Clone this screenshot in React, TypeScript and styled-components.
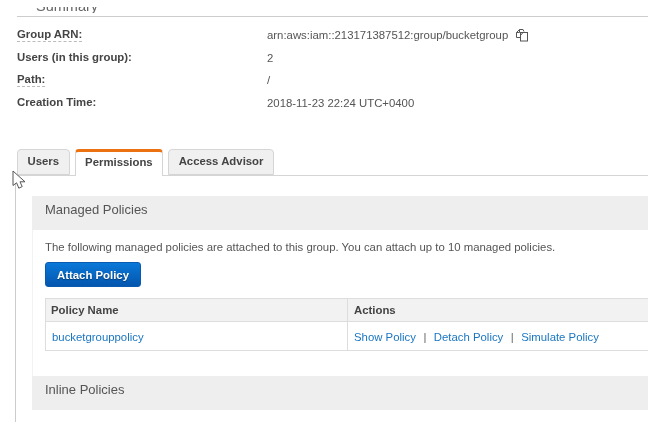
import React from 'react'
import styled, {createGlobalStyle} from 'styled-components'

const GlobalStyle = createGlobalStyle`
  html, body {
    margin: 0;
    background: #fff;
    font-family: "Liberation Sans", Arial, sans-serif;
    font-size: 11.37px;
    color: #444;
  }
`

const Page = styled.main`
  position: relative;
  width: 648px;
  height: 435px;
  overflow: hidden;
  filter: blur(0.35px);
`

const SummaryBar = styled.div`
  margin-left: 17px;
  height: 17px;
  padding-top: 7px;
  box-sizing: border-box;
  border-bottom: 1px solid #ccc;
`

// the screenshot slices the top off this heading
const SummaryClip = styled.div`
  height: 6px;
  overflow: hidden;
`

const SummaryTitle = styled.h2`
  margin: -9px 0 0 19px;
  font-size: 14.5px;
  line-height: 17px;
  font-weight: normal;
  color: #666;
`

const Details = styled.dl`
  margin: 7px 0 0 17px;
  display: grid;
  grid-template-columns: 250px 1fr;
  grid-auto-rows: 22.6px;
  align-items: center;
`

const Label = styled.dt<{$hint?: boolean}>`
  font-weight: bold;
  color: #444;
  justify-self: start;
  line-height: 13px;
  border-bottom: 1px dashed ${p => (p.$hint ? '#bbb' : 'transparent')};
`

const Value = styled.dd`
  margin: 0;
  color: #555;
  display: flex;
  align-items: center;
  gap: 7px;
`

const TabBar = styled.nav`
  margin: 35px 0 0 17px;
  display: flex;
  gap: 5px;
  height: 26px;
  border-bottom: 1px solid #d5d5d5;
`

const Tab = styled.div<{$active?: boolean}>`
  box-sizing: border-box;
  height: ${p => (p.$active ? '27px' : '26px')};
  padding: ${p => (p.$active ? '0 9.5px 5px' : '0 9.5px 2px')};
  display: flex;
  align-items: center;
  font-weight: bold;
  color: #444;
  border: 1px solid #d5d5d5;
  border-bottom: ${p => (p.$active ? 'none' : '1px solid #d5d5d5')};
  border-top: ${p => (p.$active ? '3px solid #ec7211' : '1px solid #d5d5d5')};
  border-radius: 4px 4px 0 0;
  background: ${p => (p.$active ? '#fff' : '#f0f0f0')};
`

const TabContent = styled.section`
  margin-left: 15px;
  border-left: 1px solid #ccc;
  padding: 20px 0 12px 16px;
`

const PanelHeader = styled.h3`
  margin: 0;
  box-sizing: border-box;
  height: 34px;
  padding: 0 0 7px 13px;
  display: flex;
  align-items: center;
  background: #eee;
  font-size: 13px;
  font-weight: normal;
  color: #555;
`

const PanelBody = styled.div`
  padding: 10px 0 25px 12px;
  border-left: 1px solid #f2f2f2;
`

const Intro = styled.p`
  margin: 0 0 8px;
  line-height: 14px;
  color: #555;
`

const AttachButton = styled.button`
  box-sizing: border-box;
  display: block;
  width: 96px;
  height: 25px;
  padding: 0;
  border: 1px solid #0a5bb0;
  border-radius: 3px;
  background: linear-gradient(#0a78d8, #0456ae);
  color: #fff;
  font: bold 11.37px "Liberation Sans", Arial, sans-serif;
  text-shadow: 0 1px 1px rgba(0, 0, 0, 0.4);
`

const PolicyTable = styled.div`
  margin-top: 11px;
  border: solid #ddd;
  border-width: 1px 0 1px 1px;
  display: grid;
  grid-template-columns: 301px 1fr;
  grid-template-rows: 23px 28px;
`

const HeadCell = styled.div<{$divided?: boolean}>`
  display: flex;
  align-items: center;
  padding-left: ${p => (p.$divided ? '6px' : '5px')};
  background: #f2f2f2;
  border-bottom: 1px solid #ddd;
  border-left: ${p => (p.$divided ? '1px solid #ddd' : 'none')};
  font-weight: bold;
  color: #444;
`

const BodyCell = styled.div<{$divided?: boolean}>`
  display: flex;
  align-items: center;
  padding: 2px 0 0 6px;
  border-left: ${p => (p.$divided ? '1px solid #ddd' : 'none')};
`

const PolicyLink = styled.a`
  color: #1a76c2;
  text-decoration: none;
`

const Pipe = styled.span`
  margin: 0 7.5px;
  color: #666;
`

const Cursor = styled.svg`
  position: absolute;
  left: 12px;
  top: 170px;
`

const CopyIcon = () => (
    <svg width='14' height='14' viewBox='0 0 14 14' fill='none' stroke='#555' strokeWidth='1'>
        <path d='M1.5 9.5V4.5L4.5 1.5H8L9 3.5'/>
        <path d='M4.5 1.5V4.5H1.5'/>
        <path d='M1.5 9.5H5'/>
        <rect x='5.5' y='4.5' width='7' height='8.5' fill='#fff'/>
        <path d='M5.5 7.5L8 4.5'/>
    </svg>
)

export default function App() {
    return (
        <Page>
            <GlobalStyle/>
            <SummaryBar>
                <SummaryClip>
                    <SummaryTitle>Summary</SummaryTitle>
                </SummaryClip>
            </SummaryBar>
            <Details>
                <Label $hint>Group ARN:</Label>
                <Value>arn:aws:iam::213171387512:group/bucketgroup <CopyIcon/></Value>
                <Label>Users (in this group):</Label>
                <Value>2</Value>
                <Label $hint>Path:</Label>
                <Value>/</Value>
                <Label>Creation Time:</Label>
                <Value>2018-11-23 22:24 UTC+0400</Value>
            </Details>
            <TabBar>
                <Tab>Users</Tab>
                <Tab $active>Permissions</Tab>
                <Tab>Access Advisor</Tab>
            </TabBar>
            <TabContent>
                <PanelHeader>Managed Policies</PanelHeader>
                <PanelBody>
                    <Intro>The following managed policies are attached to this group. You can attach up to 10 managed policies.</Intro>
                    <AttachButton>Attach Policy</AttachButton>
                    <PolicyTable>
                        <HeadCell>Policy Name</HeadCell>
                        <HeadCell $divided>Actions</HeadCell>
                        <BodyCell>
                            <PolicyLink>bucketgrouppolicy</PolicyLink>
                        </BodyCell>
                        <BodyCell $divided>
                            <PolicyLink>Show Policy</PolicyLink>
                            <Pipe>|</Pipe>
                            <PolicyLink>Detach Policy</PolicyLink>
                            <Pipe>|</Pipe>
                            <PolicyLink>Simulate Policy</PolicyLink>
                        </BodyCell>
                    </PolicyTable>
                </PanelBody>
                <PanelHeader>Inline Policies</PanelHeader>
            </TabContent>
            <Cursor width='14' height='20' viewBox='0 0 14 20'>
                <path d='M1 1V15.5L4.6 12.8L6.8 18.2L10.2 16.6L8 11.8H13Z' fill='#fff' stroke='#555' strokeWidth='1' strokeLinejoin='round'/>
            </Cursor>
        </Page>
    )
}
